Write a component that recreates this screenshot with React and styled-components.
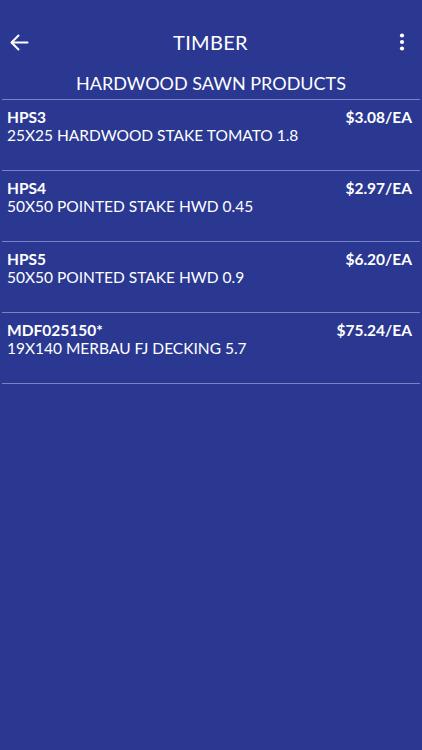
import React from 'react'
import styled, { createGlobalStyle } from 'styled-components'

const products = [
  { code: 'HPS3', name: '25X25 HARDWOOD STAKE TOMATO 1.8', price: '$3.08/EA' },
  { code: 'HPS4', name: '50X50 POINTED STAKE HWD 0.45', price: '$2.97/EA' },
  { code: 'HPS5', name: '50X50 POINTED STAKE HWD 0.9', price: '$6.20/EA' },
  { code: 'MDF025150*', name: '19X140 MERBAU FJ DECKING 5.7', price: '$75.24/EA' },
]

function App() {
  return (
    <>
      <GlobalStyle />
      <Screen>
        <TopBar>
          <IconButton aria-label="back">
            <svg width="19" height="17" viewBox="0 0 19 17" fill="none" stroke="#fff" strokeWidth="2" strokeLinecap="round" strokeLinejoin="round">
              <path d="M17.5 8.5H2" />
              <path d="M8.5 1.5L1.5 8.5l7 7" />
            </svg>
          </IconButton>
          <Title>TIMBER</Title>
          <IconButton aria-label="more">
            <svg width="6" height="18" viewBox="0 0 6 18" fill="#fff">
              <circle cx="3" cy="2.5" r="2.1" />
              <circle cx="3" cy="9" r="2.1" />
              <circle cx="3" cy="15.5" r="2.1" />
            </svg>
          </IconButton>
        </TopBar>
        <Category>HARDWOOD SAWN PRODUCTS</Category>
        <List>
          {products.map((p) => (
            <Row key={p.code}>
              <Info>
                <Code>{p.code}</Code>
                <Name>{p.name}</Name>
              </Info>
              <Price>{p.price}</Price>
            </Row>
          ))}
        </List>
      </Screen>
    </>
  )
}

export default App

const GlobalStyle = createGlobalStyle`
  html, body {
    margin: 0;
    padding: 0;
    background: #2a3892;
  }
  * {
    box-sizing: border-box;
  }
`;
const Screen = styled.div`
  width: 422px;
  height: 750px;
  background: #2a3892;
  color: #ffffff;
  font-family: Lato, "Open Sans", sans-serif;
  overflow: hidden;
`;
const TopBar = styled.header`
  display: flex;
  align-items: center;
  justify-content: space-between;
  height: 42px;
  margin-top: 21px;
  padding: 0 10px 0 9px;
`;
const IconButton = styled.div`
  width: 20px;
  height: 20px;
  display: flex;
  align-items: center;
  justify-content: center;
`;
const Title = styled.h1`
  margin: 0;
  font-size: 20px;
  font-weight: 400;
  letter-spacing: 0.3px;
`;
const Category = styled.h2`
  margin: 0;
  padding-top: 5px;
  text-align: center;
  font-size: 18px;
  font-weight: 400;
  line-height: 31px;
`;
const List = styled.ul`
  list-style: none;
  margin: 0 2px;
  padding: 0;
  border-top: 1px solid #7683c6;
`;
const Row = styled.li`
  display: flex;
  justify-content: space-between;
  align-items: flex-start;
  height: 71px;
  padding: 8px 8px 0 5px;
  border-bottom: 1px solid #7683c6;
`;
const Info = styled.div`
  display: flex;
  flex-direction: column;
`;
const Code = styled.span`
  font-size: 15.5px;
  font-weight: 700;
  line-height: 18px;
`;
const Name = styled.span`
  font-size: 15.5px;
  font-weight: 400;
  line-height: 18px;
`;
const Price = styled.span`
  font-size: 15.5px;
  font-weight: 700;
  line-height: 18px;
`;
